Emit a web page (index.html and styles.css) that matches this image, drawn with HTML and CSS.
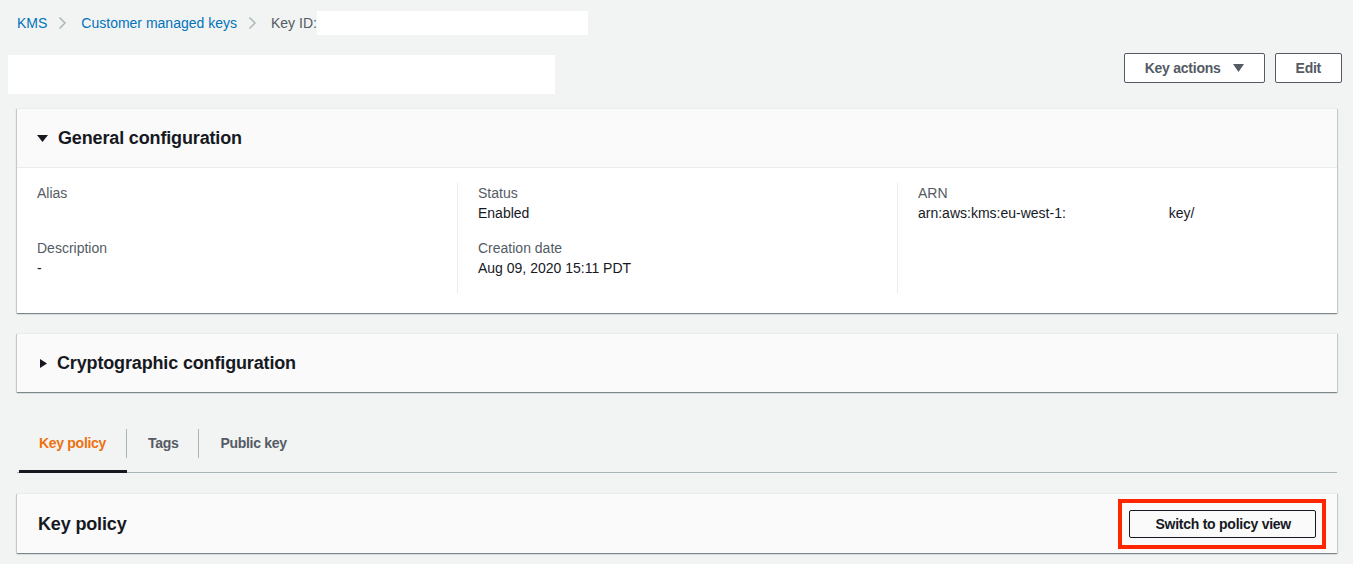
FILE: index.html
```html
<!DOCTYPE html>
<html>
<head>
<meta charset="utf-8">
<link rel="stylesheet" href="styles.css">
</head>
<body>
<nav class="crumbs">
  <a class="crumb-link">KMS</a>
  <span class="sep"><svg width="9" height="14" viewBox="0 0 9 14"><path d="M1.5 1.5 L7 7 L1.5 12.5" fill="none" stroke="#aab7b8" stroke-width="1.5"/></svg></span>
  <a class="crumb-link">Customer managed keys</a>
  <span class="sep"><svg width="9" height="14" viewBox="0 0 9 14"><path d="M1.5 1.5 L7 7 L1.5 12.5" fill="none" stroke="#aab7b8" stroke-width="1.5"/></svg></span>
  <span class="crumb-current">Key ID:</span><span class="redact-id"></span>
</nav>

<header class="page-head">
  <div class="redact-title"></div>
  <div class="actions">
    <button class="btn">Key actions <svg class="caret" width="11" height="8" viewBox="0 0 11 8"><path d="M0 0 H11 L5.5 8 Z" fill="#545b64"/></svg></button>
    <button class="btn">Edit</button>
  </div>
</header>

<main class="content">
  <section class="panel">
    <div class="panel-head">
      <svg class="tri-down" width="11" height="7" viewBox="0 0 11 7"><path d="M0 0 H11 L5.5 7 Z" fill="#16191f"/></svg>
      <h2 class="panel-title">General configuration</h2>
    </div>
    <div class="panel-body">
      <div class="col">
        <div class="field"><div class="label">Alias</div><div class="value"></div></div>
        <div class="field"><div class="label">Description</div><div class="value">-</div></div>
      </div>
      <div class="col">
        <div class="field"><div class="label">Status</div><div class="value">Enabled</div></div>
        <div class="field"><div class="label">Creation date</div><div class="value">Aug 09, 2020 15:11 PDT</div></div>
      </div>
      <div class="col">
        <div class="field"><div class="label">ARN</div><div class="value">arn:aws:kms:eu-west-1:<span class="gap"></span>key/</div></div>
      </div>
    </div>
  </section>

  <section class="panel panel-collapsed">
    <div class="panel-head">
      <svg class="tri-right" width="7" height="9" viewBox="0 0 7 9"><path d="M0 0 L7 4.5 L0 9 Z" fill="#16191f"/></svg>
      <h2 class="panel-title">Cryptographic configuration</h2>
    </div>
  </section>

  <div class="tabs">
    <div class="tab active"><span class="tab-label">Key policy</span></div>
    <div class="tab"><span class="tab-label">Tags</span></div>
    <div class="tab last"><span class="tab-label">Public key</span></div>
  </div>

  <section class="panel panel-policy">
    <div class="policy-head">
      <h2 class="panel-title">Key policy</h2>
      <div class="highlight">
        <button class="btn btn-dark">Switch to policy view</button>
      </div>
    </div>
  </section>
</main>
</body>
</html>
```

FILE: styles.css
```css
* { box-sizing: border-box; }
html, body { margin: 0; padding: 0; }
body {
  background: #f2f3f3;
  font-family: "Liberation Sans", Arial, sans-serif;
  font-size: 14px;
  line-height: 20px;
  color: #16191f;
  width: 1353px;
  height: 564px;
  overflow: hidden;
}

.crumbs {
  height: 46px;
  display: flex;
  align-items: center;
  padding-left: 17px;
}
.crumb-link { color: #0073bb; text-decoration: none; }
.sep { display: flex; align-items: center; padding: 0 14px 0 11px; }
.crumb-current { color: #545b64; }
.redact-id {
  display: inline-block;
  width: 271px;
  height: 24px;
  background: #fff;
}

.page-head {
  display: flex;
  justify-content: space-between;
  align-items: flex-start;
  padding: 7px 11px 0 8px;
  height: 62px;
}
.redact-title {
  margin-top: 2px;
  width: 547px;
  height: 39px;
  background: #fff;
}
.actions { display: flex; gap: 10px; }
.btn {
  font-family: "Liberation Sans", Arial, sans-serif;
  font-weight: bold;
  font-size: 14px;
  letter-spacing: -0.25px;
  color: #545b64;
  background: #fff;
  border: 1px solid #545b64;
  border-radius: 2px;
  height: 30px;
  padding: 0 20px;
  display: flex;
  align-items: center;
  gap: 12px;
}
.caret { display: block; }

.content { padding: 0 16px 0 17px; }

.panel {
  background: #fff;
  box-shadow: 0 1px 1px 0 rgba(0,28,36,.3), 1px 1px 1px 0 rgba(0,28,36,.15), -1px 1px 1px 0 rgba(0,28,36,.15);
  border-top: 1px solid #eaeded;
}
.panel-head {
  height: 59px;
  background: #fafafa;
  border-bottom: 1px solid #eaeded;
  display: flex;
  align-items: center;
  padding-left: 20px;
  gap: 10px;
}
.panel-collapsed .panel-head { border-bottom: none; height: 58px; padding-left: 23px; }
.panel-title {
  margin: 0;
  font-size: 18px;
  font-weight: bold;
  letter-spacing: -0.15px;
  line-height: 24px;
  color: #16191f;
}
.panel-body {
  display: grid;
  grid-template-columns: 440px 440px 440px;
  padding: 15px 0 20px;
}
.col { padding: 0 20px; }
.col + .col { border-left: 1px solid #eaeded; }
.field { margin-bottom: 15px; }
.label { color: #545b64; height: 20px; }
.value { color: #16191f; min-height: 20px; }
.gap { display: inline-block; width: 103px; }

.panel-collapsed { margin-top: 20px; }

.tabs {
  margin-top: 23px;
  display: flex;
  border-bottom: 1px solid #aab7b8;
  padding-left: 2px;
}
.tab {
  padding: 14px 0 12px;
  font-weight: bold;
  letter-spacing: -0.3px;
  color: #545b64;
  border-bottom: 3px solid transparent;
  margin-bottom: -1px;
}
.tab-label {
  display: block;
  height: 29px;
  line-height: 29px;
  padding: 0 20px 0 21px;
  border-right: 1px solid #aab7b8;
}
.tab.active { color: #ec7211; border-bottom-color: #16191f; }
.tab.active .tab-label { padding-left: 20px; }
.tab.last .tab-label { border-right: none; }

.panel-policy { margin-top: 20px; }
.policy-head {
  height: 59px;
  background: #fafafa;
  display: flex;
  align-items: center;
  justify-content: space-between;
  padding: 0 11px 0 21px;
}
.highlight {
  border: 4px solid #ff2600;
  padding: 7px 6px 7px 7px;
}
.btn-dark {
  height: 28px;
  padding: 0 24px 0 25px;
  border-color: #16191f;
  color: #16191f;
  background: #fafafa;
}
```
